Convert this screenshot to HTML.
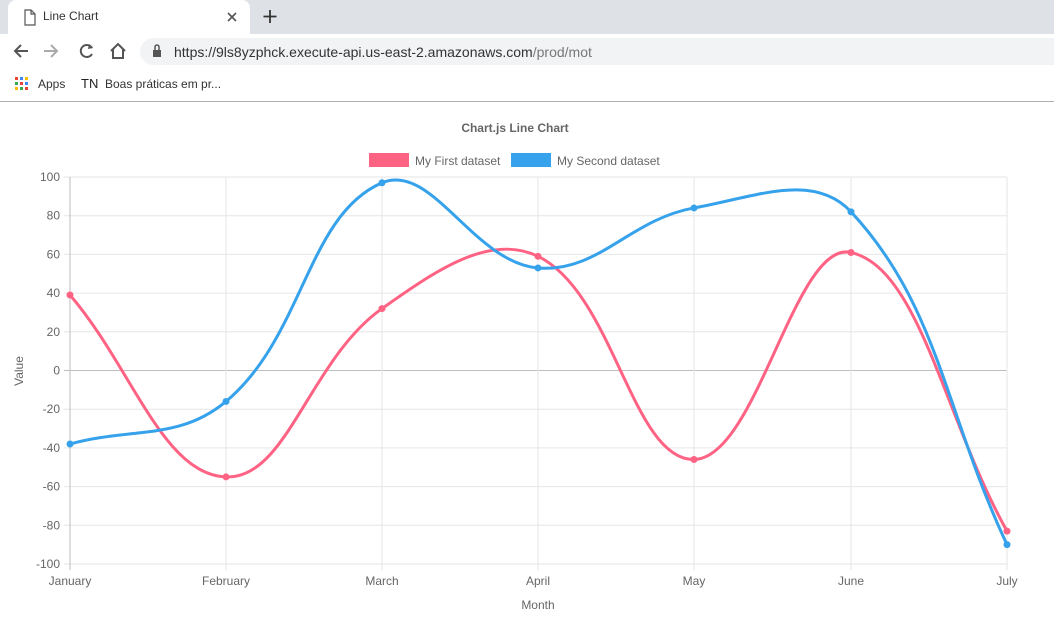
<!DOCTYPE html>
<html><head><meta charset="utf-8"><style>
body{margin:0;width:1054px;height:628px;overflow:hidden;background:#fff;font-family:"Liberation Sans",sans-serif;position:relative}
.top{position:absolute;left:0;top:0;width:1054px;height:34px;background:#dee1e6}
.tab{position:absolute;left:8px;top:0;width:242px;height:34px;background:#fff;border-radius:8px 8px 0 0}
.tb{position:absolute;top:34px;left:0;width:1054px;height:34px;background:#fff}
.omni{position:absolute;left:140px;top:38px;width:930px;height:27px;background:#f1f3f4;border-radius:14px}
.bm{position:absolute;top:68px;left:0;width:1054px;height:33px;border-bottom:1px solid #b0b0b0}
.t{position:absolute;white-space:nowrap;color:#333;font-size:13px}
</style></head><body>
<div class="top"></div><div class="tab"></div>
<div class="t" style="left:43px;top:9px;font-size:12px">Line Chart</div>
<svg style="position:absolute;left:0;top:0" width="1054" height="102">
<path d="M25 10h6l4 4v11h-10z M31 10v4h4" fill="none" stroke="#555" stroke-width="1.2"/>
<path d="M228 13l8 8M236 13l-8 8" stroke="#555" stroke-width="1.6"/>
<path d="M270 10v13M263.5 16.5h13" stroke="#333" stroke-width="1.8"/>
</svg>
<div class="tb"></div><div class="omni"></div>
<svg style="position:absolute;left:0;top:34px" width="300" height="34">
<path d="M28 17H15M21 11l-6 6 6 6" fill="none" stroke="#555" stroke-width="2"/>
<path d="M44 17h13M51 11l6 6-6 6" fill="none" stroke="#aaa" stroke-width="2"/>
<path d="M92 14a6 6 0 1 0 0 6" fill="none" stroke="#555" stroke-width="2"/><path d="M89 10l4 4-5 1z" fill="#555"/>
<path d="M111 17l7-7 7 7M113 15v9h10v-9" fill="none" stroke="#555" stroke-width="2"/>
<rect x="153" y="16" width="8" height="7" fill="#555"/><path d="M155 16v-3a2 2 0 0 1 4 0v3" fill="none" stroke="#555" stroke-width="1.5"/>
</svg>
<div class="t" style="left:174px;top:44px;font-size:14px">https://9ls8yzphck.execute-api.us-east-2.amazonaws.com<span style="color:#777">/prod/mot</span></div>
<div class="bm"></div>
<svg style="position:absolute;left:15px;top:77px" width="14" height="14">
<g><rect x="0" y="0" width="3" height="3" fill="#ea4335"/><rect x="5" y="0" width="3" height="3" fill="#4285f4"/><rect x="10" y="0" width="3" height="3" fill="#fbbc05"/>
<rect x="0" y="5" width="3" height="3" fill="#34a853"/><rect x="5" y="5" width="3" height="3" fill="#ea4335"/><rect x="10" y="5" width="3" height="3" fill="#4285f4"/>
<rect x="0" y="10" width="3" height="3" fill="#fbbc05"/><rect x="5" y="10" width="3" height="3" fill="#34a853"/><rect x="10" y="10" width="3" height="3" fill="#ea4335"/></g></svg>
<div class="t" style="left:38px;top:77px;font-size:12px">Apps</div>
<div class="t" style="left:81px;top:76px;font-size:13px;color:#222">TN</div>
<div class="t" style="left:105px;top:77px;font-size:12px">Boas práticas em pr...</div>
<svg id="ch" style="position:absolute;left:0;top:0" width="1054" height="628" font-family="Liberation Sans, sans-serif" font-size="12" fill="#666">
<text x="515" y="132" text-anchor="middle" font-weight="bold">Chart.js Line Chart</text>
<rect x="369" y="153" width="40" height="14" fill="#ff6384"/><text x="415" y="165">My First dataset</text>
<rect x="511" y="153" width="40" height="14" fill="#36a2eb"/><text x="557" y="165">My Second dataset</text>
<text x="0" y="0" transform="translate(23 371) rotate(-90)" text-anchor="middle">Value</text>
<text x="538" y="609" text-anchor="middle">Month</text>
<g id="grid"></g><g id="lines"></g>
</svg>
<script>
var X=[70,226,382,538,694,851,1007],M=["January","February","March","April","May","June","July"];
function Y(v){return 370.5-v*1.935}
var g="",ns="";
for(var v=-100;v<=100;v+=20){var y=Y(v);g+='<line x1="64" x2="1007" y1="'+y+'" y2="'+y+'" stroke="'+(v==0?'#bdbdbd':'#e6e6e6')+'"/>';g+='<text x="60" y="'+(y+4)+'" text-anchor="end">'+v+'</text>';}
for(var i=0;i<7;i++){g+='<line x1="'+X[i]+'" x2="'+X[i]+'" y1="177" y2="570" stroke="'+(i==0?'#bdbdbd':'#e6e6e6')+'"/>';g+='<text x="'+X[i]+'" y="585" text-anchor="middle">'+M[i]+'</text>';}
function path(d,c){var p=d.map(function(v,i){return[X[i],Y(v)]});var cp=[];
for(var i=0;i<p.length;i++){var pr=p[Math.max(0,i-1)],cu=p[i],nx=p[Math.min(p.length-1,i+1)];
var d01=Math.hypot(cu[0]-pr[0],cu[1]-pr[1]),d12=Math.hypot(nx[0]-cu[0],nx[1]-cu[1]);var s01=d01/(d01+d12)||0,s12=d12/(d01+d12)||0;var fa=.4*s01,fb=.4*s12;
cp.push([[cu[0]-fa*(nx[0]-pr[0]),cu[1]-fa*(nx[1]-pr[1])],[cu[0]+fb*(nx[0]-pr[0]),cu[1]+fb*(nx[1]-pr[1])]]);}
var s="M"+p[0];for(var i=1;i<p.length;i++)s+="C"+cp[i-1][1]+" "+cp[i][0]+" "+p[i];
var o='<path d="'+s+'" fill="none" stroke="'+c+'" stroke-width="3"/>';p.forEach(function(q){o+='<circle cx="'+q[0]+'" cy="'+q[1]+'" r="3.5" fill="'+c+'"/>'});return o;}
document.getElementById("grid").innerHTML=g;
document.getElementById("lines").innerHTML=path([39,-55,32,59,-46,61,-83],"#ff6384")+path([-38,-16,97,53,84,82,-90],"#36a2eb");
</script>
</body></html>
